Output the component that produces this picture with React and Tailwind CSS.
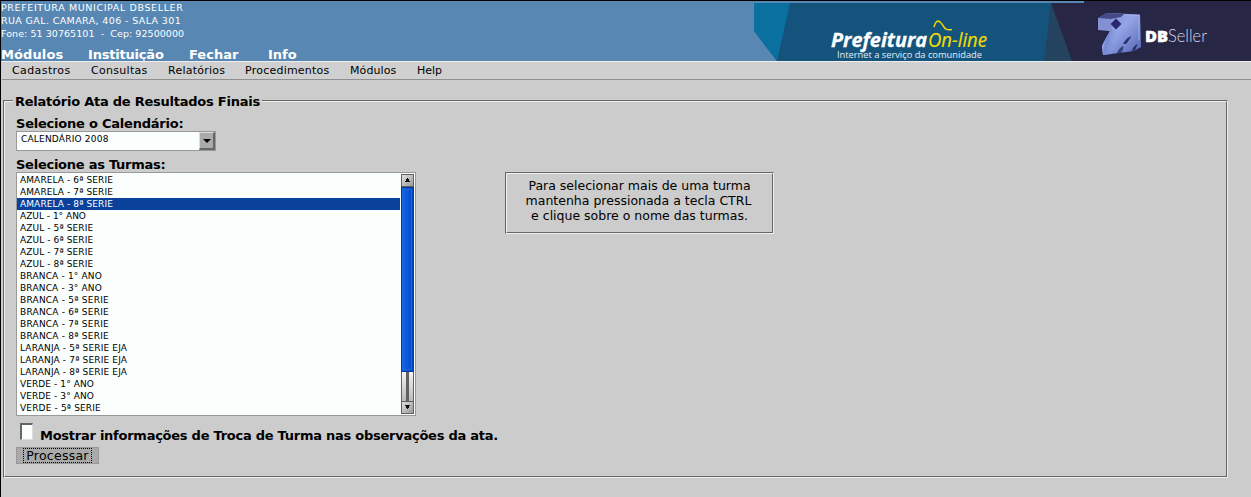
const turmas = [
  ["AMARELA - 6ª SERIE", "tracking-[0.1px]"],
  ["AMARELA - 7ª SERIE", "tracking-[0.1px]"],
  ["AMARELA - 8ª SERIE", "tracking-[0.1px]"],
  ["AZUL - 1° ANO", "tracking-[0px]"],
  ["AZUL - 5ª SERIE", "tracking-[0.1px]"],
  ["AZUL - 6ª SERIE", "tracking-[0.1px]"],
  ["AZUL - 7ª SERIE", "tracking-[0.1px]"],
  ["AZUL - 8ª SERIE", "tracking-[0.1px]"],
  ["BRANCA - 1° ANO", "tracking-[0.17px]"],
  ["BRANCA - 3° ANO", "tracking-[0.17px]"],
  ["BRANCA - 5ª SERIE", "tracking-[0.22px]"],
  ["BRANCA - 6ª SERIE", "tracking-[0.22px]"],
  ["BRANCA - 7ª SERIE", "tracking-[0.22px]"],
  ["BRANCA - 8ª SERIE", "tracking-[0.22px]"],
  ["LARANJA - 5ª SERIE EJA", "tracking-[0.15px]"],
  ["LARANJA - 7ª SERIE EJA", "tracking-[0.15px]"],
  ["LARANJA - 8ª SERIE EJA", "tracking-[0.15px]"],
  ["VERDE - 1° ANO", "tracking-[0.08px]"],
  ["VERDE - 3° ANO", "tracking-[0.08px]"],
  ["VERDE - 5ª SERIE", "tracking-[0.15px]"],
];

function Banner() {
  return (
    <svg width="497" height="60" viewBox="754 1 497 60" className="block shrink-0">
      <defs>
        <linearGradient id="cube" x1="0" y1="0" x2="1" y2="1">
          <stop offset="0" stopColor="#7f91d6" />
          <stop offset="0.45" stopColor="#93a5e6" />
          <stop offset="1" stopColor="#5363b4" />
        </linearGradient>
        <linearGradient id="side" x1="0" y1="0" x2="1" y2="0.3">
          <stop offset="0" stopColor="#b3c5f8" />
          <stop offset="0.4" stopColor="#7488d2" />
          <stop offset="1" stopColor="#8798de" stopOpacity="0" />
        </linearGradient>
      </defs>
      <rect x="754" y="1" width="497" height="60" fill="#5887b3" />
      <path d="M754 3H1084V1H1251V61H777L754 31Z" fill="#14547c" />
      <path d="M754 3H790L777 61L754 31Z" fill="#0a70a0" />
      <path d="M1051 3L1044 61H1073Z" fill="#24435f" />
      <path d="M1051 3H1084V1H1251V61H1072Z" fill="#272645" />
      <path d="M1098 18L1107 13L1140 14.5L1141 47L1134 51L1103 55L1102 46L1106 38L1110 31L1098 30Z" fill="url(#cube)" />
      <path d="M1098 19L1111 18L1112 30L1098 30Z" fill="#8391d2" />
      <path d="M1098 18L1107 13L1124 14L1121 17L1111 19Z" fill="#45498a" />
      <path d="M1111 29L1117 31Q1112 41 1112 54L1103 55L1102 46L1106 38Z" fill="url(#side)" />
      <path d="M1116 18.5L1121.5 24L1116 29.5L1110.5 24Z" fill="#2b2770" />
      <path d="M1131.5 36Q1126 38 1123 44L1126 44Q1130 39 1131.5 36Z" fill="#29326e" />
      <path d="M1123 46Q1119 48 1117 53H1121Q1124 49 1123 46Z" fill="#36417f" />
      <path d="M1138 44Q1134 45 1131.500 51L1135 50.500Q1136 47 1138 44Z" fill="#29306c" />
      <path d="M1124 15L1139 15.500V40" fill="none" stroke="#a4b1ea" strokeWidth="0.8" />
      <text x="831" y="46.5" fontFamily="Open Sans, sans-serif" fontSize="20" fontWeight="700" fontStyle="italic" fill="white" stroke="white" strokeWidth="0.3" textLength="96" lengthAdjust="spacingAndGlyphs">Prefeitura</text>
      <text x="928" y="46.5" fontFamily="Open Sans, sans-serif" fontSize="20" fontStyle="italic" fill="#f3dc00" stroke="#f3dc00" strokeWidth="0.2" textLength="59" lengthAdjust="spacingAndGlyphs">On-line</text>
      <path d="M934 27Q936 19 940 22C945 26 943 31 952 29.500" fill="none" stroke="#f3d600" strokeWidth="1.6" />
      <text x="837" y="57.5" fontFamily="Open Sans, sans-serif" fontSize="9.7" fontWeight="500" fill="#e5eef5" textLength="145" lengthAdjust="spacingAndGlyphs">Internet a serviço da comunidade</text>
      <text x="1145" y="42" fontFamily="Open Sans, sans-serif" fontSize="16" fontWeight="800" fill="white" stroke="white" strokeWidth="0.5" textLength="23" lengthAdjust="spacingAndGlyphs">DB</text>
      <text x="1168" y="42" fontFamily="Lato, sans-serif" fontSize="18" fontWeight="300" fill="#d6d5e5" textLength="39" lengthAdjust="spacingAndGlyphs">Seller</text>
    </svg>
  );
}

function ScrollButton({ up = false }) {
  return (
    <div className="flex h-[13px] w-[13px] shrink-0 items-center justify-center border border-[#606060] bg-linear-to-br from-[#e0e0e0] to-[#999999]">
      <svg width="7" height="5" viewBox="0 0 7 5">
        <path d={up ? "M3 0H4V1H5V3H6V4H1V3H2V1H3Z" : "M1 0H6V1H5V3H4V4H3V3H2V1H1Z"} fill="#111" />
      </svg>
    </div>
  );
}

export default function App() {
  return (
    <div className="flex h-[497px] w-[1251px] flex-col overflow-hidden border-t border-l border-black bg-[#cccccc] font-['DejaVu_Sans',sans-serif] whitespace-nowrap text-black">
      <header className="flex h-[60px] shrink-0 bg-[#5887b3] text-white">
        <div className="flex w-[753px] shrink-0 flex-col">
          <div className="text-[9.5px] leading-[13px]">
            <div className="tracking-[0.62px]">PREFEITURA MUNICIPAL DBSELLER</div>
            <div className="tracking-[0.38px]">RUA GAL. CAMARA, 406 - SALA 301</div>
            <div className="tracking-[0.06px] whitespace-pre">Fone: 51 30765101  -  Cep: 92500000</div>
          </div>
          <nav className="mt-[7px] flex text-[13px] leading-[16px] font-bold">
            <span className="w-[87px] tracking-[0.1px]">Módulos</span>
            <span className="w-[101px] tracking-[-0.2px]">Instituição</span>
            <span className="w-[79px]">Fechar</span>
            <span>Info</span>
          </nav>
        </div>
        <Banner />
      </header>
      <nav className="ml-px flex h-[19px] shrink-0 border-t border-b border-t-[#eeeeee] border-b-[#909090] bg-[#d0d0d0] pl-[10px] text-[11px] leading-[17px]">
        <span className="w-[79px] tracking-[0.4px]">Cadastros</span>
        <span className="w-[77px] tracking-[0.3px]">Consultas</span>
        <span className="w-[77px] tracking-[0.25px]">Relatórios</span>
        <span className="w-[105px] tracking-[0.23px]">Procedimentos</span>
        <span className="w-[67px] tracking-[0.1px]">Módulos</span>
        <span>Help</span>
      </nav>
      <main className="mt-[14px] ml-[2px] w-[1225px]">
        <div className="flex h-[16px] items-start">
          <div className="mt-[6px] h-[10px] w-[10px] border-t border-l border-[#666666]"><div className="h-full border-t border-l border-[#eeeeee]" /></div>
          <h1 className="w-[249px] pl-[2px] text-[13px] leading-[16px] font-bold tracking-[-0.24px]">Relatório Ata de Resultados Finais</h1>
          <div className="mt-[6px] h-[10px] grow border-t border-r border-t-[#666666] border-r-[#eeeeee]"><div className="h-full border-t border-r border-t-[#eeeeee] border-r-[#666666]" /></div>
        </div>
        <div className="h-[368px] border-r border-b border-l border-r-[#eeeeee] border-b-[#eeeeee] border-l-[#666666]">
          <div className="h-full border-r border-b border-l border-r-[#666666] border-b-[#666666] border-l-[#eeeeee] pt-[6px] pl-[11px]">
            <div className="h-[15px] text-[13px] leading-[16px] font-bold tracking-[-0.22px]">Selecione o Calendário:</div>
            <div className="flex h-[20px] w-[200px] border border-[#999999] bg-[#fafffd]">
              <span className="grow pl-[4px] text-[9px] leading-[15px] tracking-[0.2px]">CALENDÁRIO 2008</span>
              <div className="flex h-[18px] w-[16px] items-center justify-center border-t border-r-2 border-b-2 border-l border-t-[#dddddd] border-r-[#666666] border-b-[#666666] border-l-[#dddddd] bg-[#aaaaaa]">
                <svg width="8" height="4" viewBox="0 0 8 4"><path d="M0 0H8L4 4Z" /></svg>
              </div>
            </div>
            <div className="mt-[5px] h-[16px] text-[13px] leading-[17px] font-bold tracking-[-0.25px]">Selecione as Turmas:</div>
            <div className="flex">
              <div className="flex h-[244px] w-[400px] shrink-0 border border-[#999999] bg-[#fafffd]">
                <div className="w-[383px] pt-px text-[9px] leading-[12px]">
                  {turmas.map(([nome, tracking], i) => (
                    <div key={nome} className={i === 2 ? "h-[12px] bg-[#0a419b] pl-[3px] text-white" : "h-[12px] pl-[3px]"}>
                      <span className={tracking}>{nome}</span>
                    </div>
                  ))}
                </div>
                <div className="mt-px ml-px flex h-[240px] w-[13px] flex-col bg-[#eeeeee]">
                  <ScrollButton up />
                  <div className="h-[185px] border border-[#063b9d] bg-linear-to-r from-[#1369e8] to-[#0645c0] p-px"><div className="h-full border border-[#1c62d8]" /></div>
                  <div className="flex grow justify-center border-x border-[#606060] bg-linear-to-b from-[#f4f4f4] to-[#bbbbbb]"><div className="w-[3px] bg-[#606060]" /></div>
                  <ScrollButton />
                </div>
              </div>
              <div className="ml-[89px] h-[62px] w-[269px] border border-t-[#666666] border-r-[#eeeeee] border-b-[#eeeeee] border-l-[#666666]">
                <div className="h-full border border-t-[#eeeeee] border-r-[#666666] border-b-[#666666] border-l-[#eeeeee] pt-[4px] text-center text-[12.5px] leading-[15px]">
                  <div>Para selecionar mais de uma turma</div>
                  <div className="pr-[2px]">mantenha pressionada a tecla CTRL</div>
                  <div>e clique sobre o nome das turmas.</div>
                </div>
              </div>
            </div>
            <div className="mt-[7px] flex h-[24px]">
              <div className="ml-[4px] h-[17px] w-[13px] border-t-2 border-r border-b border-l-2 border-t-[#666666] border-r-[#dddddd] border-b-[#dddddd] border-l-[#666666] bg-[#fafffd]" />
              <label className="ml-[7px] pt-[5px] text-[13px] leading-[16px] font-bold tracking-[-0.255px]">Mostrar informações de Troca de Turma nas observações da ata.</label>
            </div>
            <button className="flex h-[17px] w-[83px] items-center justify-center border border-[#999999] bg-[#aaaaaa] text-[12.5px] tracking-[0.25px]">
              <span className="flex h-[15px] w-[69px] items-center justify-center border border-dotted border-black pt-[2px]">Processar</span>
            </button>
          </div>
        </div>
      </main>
    </div>
  );
}
